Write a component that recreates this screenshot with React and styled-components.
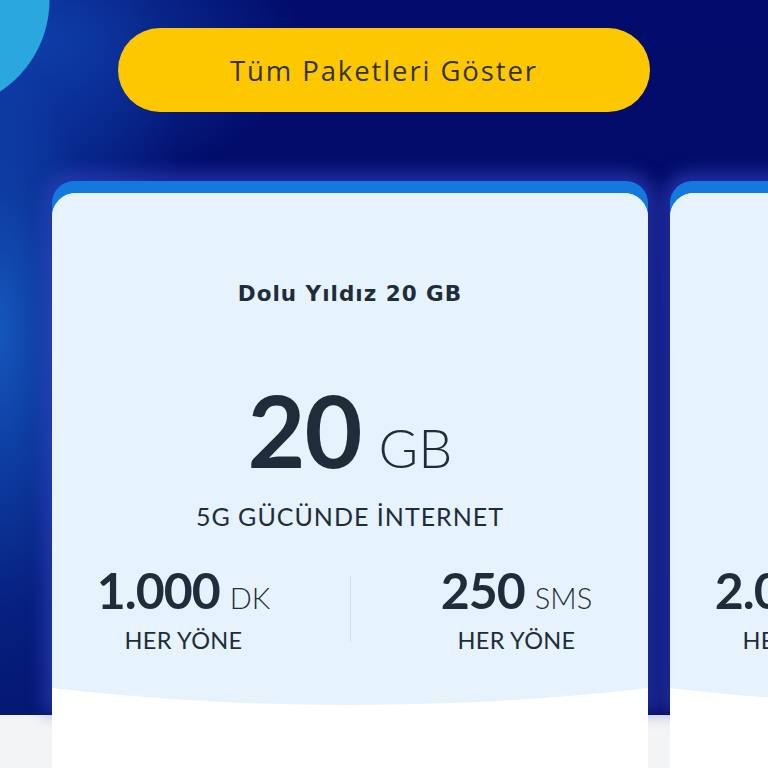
import React from "react";
import styled, { createGlobalStyle } from "styled-components";

const GlobalStyle = createGlobalStyle`
  html, body {
    margin: 0;
    padding: 0;
  }
  body {
    font-family: "Lato", "Noto Sans", sans-serif;
    background: #f3f4f6;
  }
`;

const Page = styled.div`
  position: relative;
  isolation: isolate;
  width: 768px;
  height: 768px;
  overflow: hidden;
  background:
    radial-gradient(circle 110px at -60px 0px, #2ba7df 99%, transparent 100%) top left / 100% 715px no-repeat,
    radial-gradient(ellipse 190px 560px at 0px 330px, rgba(24, 100, 204, 0.85), rgba(12, 64, 172, 0.4) 50%, transparent 100%) top left / 100% 715px no-repeat,
    radial-gradient(ellipse 260px 160px at 40px 40px, rgba(20, 80, 190, 0.7), transparent 100%) top left / 100% 715px no-repeat,
    linear-gradient(180deg, #020c6c, #020a60) top left / 100% 715px no-repeat,
    #f3f4f6;
  padding-top: 28px;
  box-sizing: border-box;
`;

const ShowAllButton = styled.button`
  display: block;
  margin: 0 auto;
  width: 532px;
  height: 84px;
  border: none;
  border-radius: 42px;
  background: #fec800;
  color: #34332a;
  font-family: "Open Sans", "Lato", sans-serif;
  font-size: 27.5px;
  font-weight: 400;
  letter-spacing: 1.9px;
  cursor: pointer;
`;

const CardRow = styled.div`
  display: flex;
  gap: 22px;
  margin-top: 69px;
  padding-left: 52px;
`;

const Card = styled.div`
  position: relative;
  flex: 0 0 596px;
  height: 620px;
  background: #1479df;
  border-radius: 22px 22px 0 0;
  padding-top: 12px;
  box-sizing: border-box;

  /* bluish glow behind the card, stops where the dark area ends */
  &::before {
    content: "";
    position: absolute;
    top: -10px;
    left: -9px;
    right: -9px;
    height: 542px;
    border-radius: 30px 30px 0 0;
    background: rgba(52, 70, 196, 0.55);
    filter: blur(8px);
    z-index: -1;
  }
`;

const CardBody = styled.div`
  height: 100%;
  background: #ffffff;
  border-radius: 24px 24px 0 0;
  overflow: hidden;
`;

const Hero = styled.div`
  background: #e6f3fc;
  height: 512px;
  clip-path: ellipse(196% 100% at 50% 0);
  display: flex;
  flex-direction: column;
  align-items: center;
  color: #1f2c3b;
  padding-top: 88px;
  box-sizing: border-box;
`;

const Title = styled.div`
  font-family: "DejaVu Sans", sans-serif;
  font-size: 21.5px;
  font-weight: 700;
  letter-spacing: 1px;
  line-height: 26px;
`;

const Amount = styled.div`
  display: flex;
  align-items: baseline;
  gap: 17px;
  margin-top: 77px;
  line-height: 90px;
`;

const Big = styled.span`
  font-size: ${p => p.size}px;
  font-weight: 700;
  letter-spacing: -1px;
`;

const Unit = styled.span`
  font-size: ${p => p.size}px;
  font-weight: 300;
`;

const Subtitle = styled.div`
  font-size: 25px;
  font-weight: 400;
  margin-top: 8px;
  letter-spacing: 1px;
`;

const Stats = styled.div`
  display: flex;
  align-items: center;
  align-self: stretch;
  justify-content: center;
  gap: 46px;
  margin-top: 33px;
`;

const Stat = styled.div`
  width: 240px;
  display: flex;
  flex-direction: column;
  align-items: center;
`;

const StatValue = styled.div`
  display: flex;
  align-items: baseline;
  gap: 10px;
  line-height: 52px;
`;

const StatLabel = styled.div`
  font-size: 23.5px;
  margin-top: 2px;
  letter-spacing: 0.3px;
`;

const Divider = styled.div`
  width: 1px;
  height: 66px;
  background: #cfdde8;
`;

const packages = [
  { name: "Dolu Yıldız 20 GB", gb: "20", dk: "1.000", sms: "250" },
  { name: "Dolu Yıldız 40 GB", gb: "40", dk: "2.000", sms: "500" }
];

export default function App() {
  return (
    <>
      <GlobalStyle />
      <Page>
        <ShowAllButton>Tüm Paketleri Göster</ShowAllButton>
        <CardRow>
          {packages.map(p => (
            <Card key={p.name}>
              <CardBody>
                <Hero>
                  <Title>{p.name}</Title>
                  <Amount>
                    <Big size={100}>{p.gb}</Big>
                    <Unit size={54}>GB</Unit>
                  </Amount>
                  <Subtitle>5G GÜCÜNDE İNTERNET</Subtitle>
                  <Stats>
                    <Stat>
                      <StatValue>
                        <Big size={50}>{p.dk}</Big>
                        <Unit size={29}>DK</Unit>
                      </StatValue>
                      <StatLabel>HER YÖNE</StatLabel>
                    </Stat>
                    <Divider />
                    <Stat>
                      <StatValue>
                        <Big size={50}>{p.sms}</Big>
                        <Unit size={29}>SMS</Unit>
                      </StatValue>
                      <StatLabel>HER YÖNE</StatLabel>
                    </Stat>
                  </Stats>
                </Hero>
              </CardBody>
            </Card>
          ))}
        </CardRow>
      </Page>
    </>
  );
}
